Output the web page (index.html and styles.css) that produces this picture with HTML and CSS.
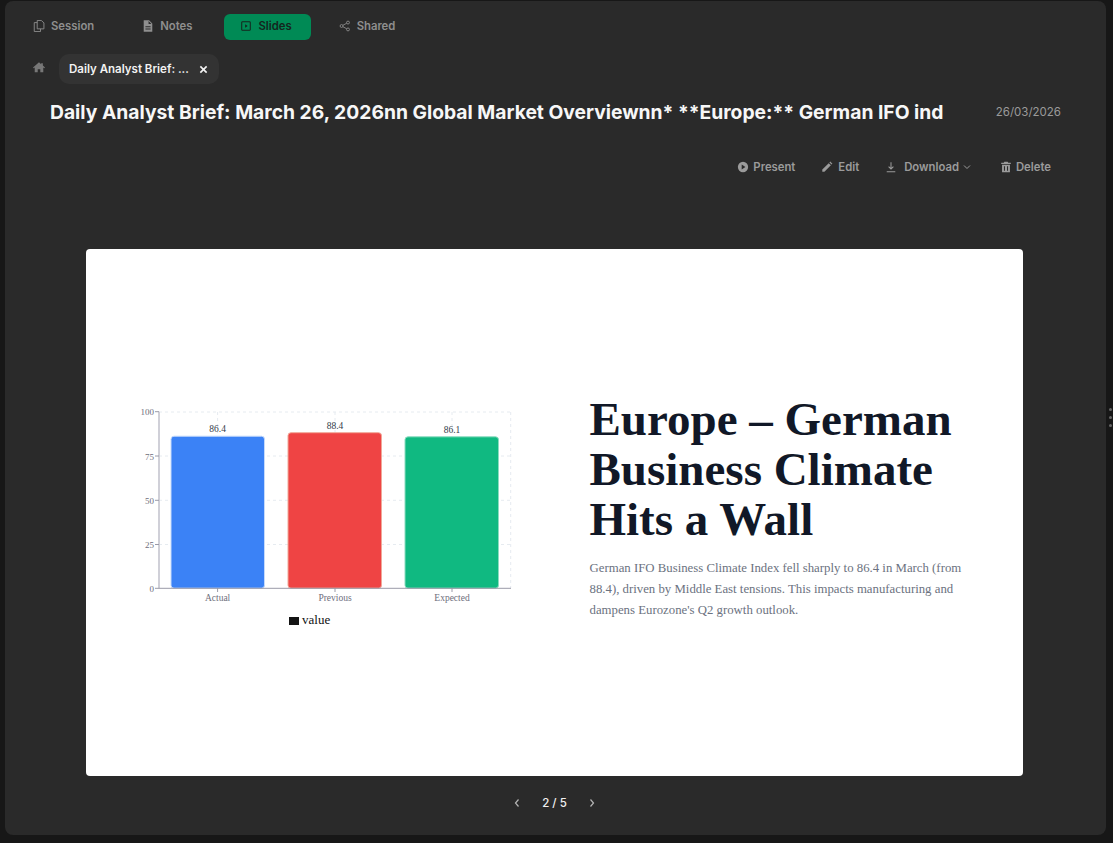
FILE: index.html
```html
<!DOCTYPE html>
<html>
<head>
  <link rel="stylesheet" href="styles.css">
</head>
<body>
  <div class="panel">
    <div class="nav-tabs">
      <button class="nav-tab">
        <svg class="icon" viewBox="1 .3 12 13.400" fill="none" stroke="currentColor" stroke-width="1"><path d="M5 .8h4.500L12.500 3.500v6.700H5z"/><path d="M5 3.200H1.700v10h7v-3"/></svg>
        Session
      </button>
      <button class="nav-tab">
        <svg class="icon" viewBox="1 .7 12 12.600" fill="currentColor"><path d="M2.500 1h5.600l3.400 3.400V13h-9zM7.600 1.800v3h3zM4.300 7.300v1h5.400v-1zM4.300 9.600v1h5.400v-1z" fill-rule="evenodd"/></svg>
        Notes
      </button>
      <button class="nav-tab nav-tab-active">
        <svg class="icon" viewBox="0 0 14 14" fill="none" stroke="currentColor" stroke-width="1.200"><rect x="2" y="2" width="10" height="10" rx="1"/><path d="M6 5l3 2-3 2z" fill="currentColor" stroke="none"/></svg>
        Slides
      </button>
      <button class="nav-tab">
        <svg class="icon" viewBox="1 0 12 14" fill="none" stroke="currentColor" stroke-width="1"><circle cx="3" cy="7" r="1.700"/><circle cx="10.500" cy="3" r="1.700"/><circle cx="10.500" cy="11" r="1.700"/><path d="M4.500 6.200l4.500-2.400M4.500 7.800l4.500 2.400"/></svg>
        Shared
      </button>
    </div>

    <div class="doc-tabs">
      <svg class="home-icon" viewBox="0 0 14 12" fill="currentColor"><path d="M7 0l2.500 2.100V1h2v2.800L14 6l-.8.800L12 5.900V11.500H8.500V8h-3v3.500H2V5.900L.8 6.800 0 6z"/></svg>
      <div class="doc-tab">
        <span class="doc-tab-name">Daily Analyst Brief: ...</span>
        <svg class="doc-tab-close" viewBox="0 0 10 10" fill="none" stroke="currentColor" stroke-width="1.800"><path d="M1.500 1.500l7 7M8.500 1.500l-7 7"/></svg>
      </div>
    </div>

    <div class="title-row">
      <h1 class="title">Daily Analyst Brief: March 26, 2026nn Global Market Overviewnn* **Europe:** German IFO ind</h1>
      <span class="title-date">26/03/2026</span>
    </div>

    <div class="actions">
      <button class="action">
        <svg class="icon" viewBox="0 0 14 14"><circle cx="7" cy="7" r="6" fill="currentColor"/><path d="M5.500 4.200l4.300 2.800-4.300 2.800z" fill="#2a2a2a"/></svg>
        Present
      </button>
      <button class="action action-edit">
        <svg class="icon" viewBox="0 0 14 14" fill="currentColor"><path d="M1.500 12.500V10L9 2.500 11.500 5 4 12.500zM9.800 1.700l1-1 2.500 2.500-1 1z"/></svg>
        Edit
      </button>
      <button class="action action-download">
        <svg class="icon" viewBox="0 0 14 14" fill="none" stroke="currentColor" stroke-width="1.200"><path d="M7 1.500v7.500M4.200 6.500L7 9.300l2.800-2.800M2 12.500h10"/></svg>
        <span class="action-label">Download</span>
        <svg class="chevron" viewBox="0 0 8 8" fill="none" stroke="currentColor" stroke-width="1"><path d="M1 2.500l3 3 3-3"/></svg>
      </button>
      <button class="action">
        <svg class="icon" viewBox="1 0 12 14" fill="currentColor"><path d="M5 .8h4l.6 1.200h3v1.400H1.400V2h3zM2.400 4.400h9.200V13.200H2.400zM4.600 6v5.500h1.200V6zM8.200 6v5.500h1.200V6z" fill-rule="evenodd"/></svg>
        Delete
      </button>
    </div>

    <div class="stage">
      <div class="slide">
        <svg class="chart" viewBox="130 400 385 235" width="385" height="235">
          <g class="grid">
            <path d="M159 412H511M159 456H511M159 500.300H511M159 544.500H511"/>
            <path d="M217.600 412V588M335 412V588M452 412V588M510.700 412V588"/>
          </g>
          <rect class="bar" x="171" y="436.200" width="93.500" height="152" rx="3" fill="#3b82f6" stroke="#c5dafb"/>
          <rect class="bar" x="288" y="432.700" width="93.500" height="155.500" rx="3" fill="#ef4444" stroke="#f0a898"/>
          <rect class="bar" x="405" y="436.800" width="93.500" height="151.400" rx="3" fill="#10b981" stroke="#8cdcc0"/>
          <path class="axis-y" d="M159 411.700V588.300"/>
          <path class="axis-x" d="M155 411.700H159M155 456H159M155 500.300H159M155 544.500H159M155 588.300H511M217.600 588V592M335 588V592M452 588V592"/>
          <g class="tick-y">
            <text x="154" y="415">100</text>
            <text x="154" y="459.500">75</text>
            <text x="154" y="503.500">50</text>
            <text x="154" y="548">25</text>
            <text x="154" y="592">0</text>
          </g>
          <g class="tick-x">
            <text x="217.600" y="601">Actual</text>
            <text x="335" y="601">Previous</text>
            <text x="452" y="601">Expected</text>
          </g>
          <g class="bar-label">
            <text x="217.600" y="432">86.4</text>
            <text x="335" y="429">88.4</text>
            <text x="452" y="433">86.1</text>
          </g>
          <rect x="289" y="617" width="10" height="8" fill="#141414"/>
          <text class="legend" x="302" y="624">value</text>
        </svg>
        <div class="slide-text">
          <h2 class="slide-title">Europe – German Business Climate Hits a Wall</h2>
          <p class="slide-body">German IFO Business Climate Index fell sharply to 86.4 in March (from 88.4), driven by Middle East tensions. This impacts manufacturing and dampens Eurozone's Q2 growth outlook.</p>
        </div>
      </div>
    </div>

    <div class="pager">
      <svg class="pager-arrow" viewBox="0 0 8 10" fill="none" stroke="currentColor" stroke-width="1.200"><path d="M5.500 1.500L2.500 5l3 3.500"/></svg>
      <span class="pager-count">2 / 5</span>
      <svg class="pager-arrow" viewBox="0 0 8 10" fill="none" stroke="currentColor" stroke-width="1.200"><path d="M2.500 1.500l3 3.500-3 3.500"/></svg>
    </div>
  </div>

  <div class="handle"><i></i><i></i><i></i></div>
</body>
</html>
```

FILE: styles.css
```css
* {
  box-sizing: border-box;
}

html, body {
  height: 100%;
}

body {
  margin: 0;
  padding: 1px 7px 8px 5px;
  background: #171717;
  font-family: Inter, "Liberation Sans", sans-serif;
  overflow: hidden;
}

button {
  font-family: inherit;
  border: none;
  background: none;
  cursor: pointer;
}

.panel {
  display: flex;
  flex-direction: column;
  height: 834px;
  background: #2a2a2a;
  border-radius: 8px;
}

.icon {
  width: 12px;
  height: 12px;
  flex: none;
}

.nav-tabs {
  display: flex;
  gap: 12px;
  padding: 13px 10px 0;
}

.nav-tab {
  display: flex;
  align-items: center;
  gap: 6px;
  height: 26px;
  padding: 0 18px 2px;
  border-radius: 6px;
  color: #8f8f8f;
  font-size: 11.3px;
  font-weight: 600;
}

.nav-tab-active {
  margin: 0 -2px 0 2px;
  padding: 0 19px 2px 16px;
  background: #008a55;
  color: #14261e;
}

.doc-tabs {
  display: flex;
  align-items: center;
  gap: 14px;
  padding: 14px 0 0 28px;
}

.home-icon {
  width: 12px;
  height: 11px;
  margin-top: -3px;
  color: #777;
}

.doc-tab {
  display: flex;
  align-items: center;
  justify-content: space-between;
  width: 160px;
  height: 30px;
  padding: 0 11px 0 10px;
  background: #333;
  border-radius: 10px;
}

.doc-tab-name {
  color: #f2f2f2;
  font-size: 11.5px;
  font-weight: 600;
}

.doc-tab-close {
  width: 9px;
  height: 9px;
  color: #f2f2f2;
}

.title-row {
  display: flex;
  align-items: center;
  justify-content: space-between;
  padding: 15px 45px 1px;
}

.title {
  margin: 0;
  color: #f7f7f7;
  font-size: 19.3px;
  line-height: 26px;
  font-weight: 700;
  white-space: nowrap;
}

.title-date {
  color: #9a9a9a;
  font-size: 11.5px;
}

.actions {
  display: flex;
  justify-content: flex-end;
  gap: 26px;
  padding: 33px 55px 0 0;
}

.action {
  display: flex;
  align-items: center;
  gap: 4px;
  padding: 0;
  height: 16px;
  color: #9b9b9b;
  font-size: 11.3px;
  font-weight: 600;
}

.action-edit {
  gap: 5px;
}

.action-label {
  margin-left: 3px;
}

.action-download {
  margin-right: 3px;
}

.chevron {
  width: 8px;
  height: 8px;
}

.stage {
  display: flex;
  justify-content: center;
  padding-top: 74px;
  padding-right: 3px;
}

.slide {
  display: flex;
  align-items: center;
  gap: 75px;
  width: 937px;
  height: 527px;
  padding-left: 44px;
  background: #fff;
  border-radius: 4px;
}

.chart {
  flex: none;
  margin-top: 9px;
  font-family: "Liberation Serif", serif;
}

.grid path {
  fill: none;
  stroke: #e6ebf0;
  stroke-dasharray: 3 3;
}

.axis-y {
  fill: none;
  stroke: #d0d0d8;
  stroke-width: 2;
}

.axis-x {
  fill: none;
  stroke: #9a9aa8;
}

.tick-y text {
  fill: #6e6e7c;
  font-size: 9px;
  text-anchor: end;
}

.tick-x text {
  fill: #6e6e7c;
  font-size: 9.5px;
  text-anchor: middle;
}

.bar-label text {
  fill: #333c4a;
  font-size: 9.5px;
  text-anchor: middle;
}

.legend {
  fill: #111;
  font-size: 13px;
}

.slide-text {
  width: 372px;
  margin-top: -10px;
}

.slide-title {
  margin: 0;
  color: #111827;
  font-family: "Liberation Serif", serif;
  font-size: 47px;
  line-height: 50px;
  font-weight: 700;
}

.slide-body {
  margin: 14px 0 0;
  color: #6b7280;
  font-family: "Liberation Serif", serif;
  font-size: 12.8px;
  line-height: 21px;
}

.pager {
  display: flex;
  justify-content: center;
  align-items: center;
  gap: 21px;
  padding-top: 20px;
  padding-right: 2px;
}

.pager-arrow {
  width: 8px;
  height: 10px;
  color: #b5b5b5;
}

.pager-count {
  color: #f0f0f0;
  font-size: 11.5px;
  font-weight: 500;
}

.handle {
  position: absolute;
  top: 408px;
  left: 1109px;
  display: flex;
  flex-direction: column;
  gap: 5px;
}

.handle i {
  width: 3px;
  height: 3px;
  background: #666;
  border-radius: 50%;
}
```
